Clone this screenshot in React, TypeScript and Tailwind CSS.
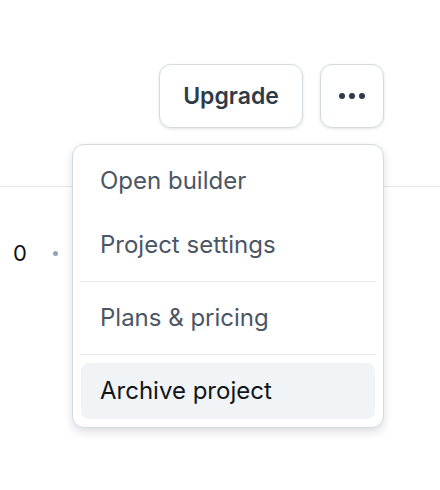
export default function App() {
  const items = [
    { label: "Open builder" },
    { label: "Project settings" },
    { divider: true },
    { label: "Plans & pricing" },
    { divider: true },
    { label: "Archive project", active: true },
  ];

  return (
    <div className="relative h-[490px] w-[440px] overflow-hidden bg-white font-['Inter',sans-serif]">
      <header className="flex justify-end gap-[17px] border-b border-[#e5e7eb] pb-[58px] pr-[56px] pt-16">
        <button className="flex h-[64px] w-[144px] items-center justify-center rounded-xl border border-[#d5dadf] bg-white text-[23px] font-semibold text-[#2f3b48] shadow-[0_1px_3px_rgba(15,23,42,0.12)]">
          Upgrade
        </button>
        <div className="relative">
          <button className="flex h-[64px] w-[64px] items-center justify-center gap-[4px] rounded-xl border border-[#d5dadf] bg-white shadow-[0_1px_3px_rgba(15,23,42,0.12)]">
            <span className="h-[6px] w-[6px] rounded-full bg-[#2f3b48]" />
            <span className="h-[6px] w-[6px] rounded-full bg-[#2f3b48]" />
            <span className="h-[6px] w-[6px] rounded-full bg-[#2f3b48]" />
          </button>
          <div className="absolute right-0 top-[80px] z-10 flex w-[312px] flex-col gap-2 rounded-xl border border-[#d5dadf] bg-white p-2 shadow-[0_4px_10px_rgba(15,23,42,0.14)]">
            {items.map((item, i) =>
              item.divider ? (
                <div key={i} className="mx-[-1px] h-px bg-[#e8eaec]" />
              ) : (
                <div
                  key={i}
                  className={
                    item.active
                      ? "flex h-14 items-center rounded-lg bg-[#f1f4f7] px-[19px] text-[24px] text-[#111418]"
                      : "flex h-14 items-center rounded-lg px-[19px] text-[24px] text-[#4b5665]"
                  }
                >
                  {item.label}
                </div>
              )
            )}
          </div>
        </div>
      </header>
      <div className="flex items-center gap-[26px] pl-[13px] pt-[52px]">
        <span className="text-[22px] leading-7 text-[#111111]">0</span>
        <span className="h-[5px] w-[5px] rounded-full bg-[#94a3b8]" />
      </div>
    </div>
  );
}
